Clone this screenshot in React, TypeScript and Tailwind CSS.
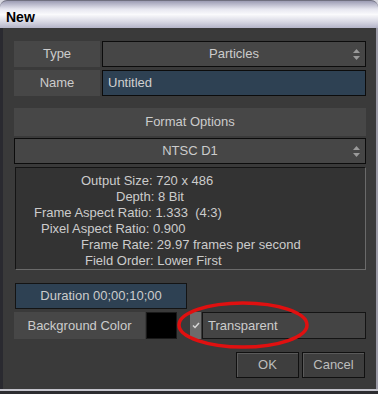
import React from 'react'

const font = { fontFamily: '"Liberation Sans", Arial, sans-serif' }

function Spinner() {
  return (
    <svg width="7" height="11" viewBox="0 0 7 11" className="absolute right-[5px] top-[7px]">
      <path d="M3.5 0 L7 4 L0 4 Z" fill="#9a9a9a" />
      <path d="M3.5 11 L7 7 L0 7 Z" fill="#9a9a9a" />
    </svg>
  )
}

const infoLines = [
  { text: 'Output Size: 720 x 486', pl: 'pl-[65px]' },
  { text: 'Depth: 8 Bit', pl: 'pl-[100px]' },
  { text: 'Frame Aspect Ratio: 1.333\u00a0 (4:3)', pl: 'pl-[18px]' },
  { text: 'Pixel Aspect Ratio: 0.900', pl: 'pl-[25px]' },
  { text: 'Frame Rate: 29.97 frames per second', pl: 'pl-[65px]' },
  { text: 'Field Order: Lower First', pl: 'pl-[69px]' },
]

export default function App() {
  return (
    <div className="w-[378px] h-[394px] bg-[#d8d8e0] relative overflow-hidden text-[13px] text-[#cccccc]" style={font}>
      {/* title bar */}
      <div className="h-[28px] rounded-t-[7px] border-t border-[#707080] bg-[linear-gradient(to_bottom,#9c9cb4_0%,#e6e6f0_30%,#fafafc_50%,#d6d6e2_78%,#b4b4c8_100%)] pl-[6px] pt-[6px]">
        <span className="text-[14px] font-bold text-black">New</span>
      </div>

      {/* body */}
      <div className="h-[361px] bg-[#3a3a3a] border-l-[3px] border-l-[#2a2a30] border-r-[2px] border-r-[#9c9ca8] pl-[11px] pr-[10px] pt-[13px]">
        <div className="flex gap-[2px] h-[26px]">
          <div className="w-[86px] bg-[#474747] flex items-center justify-center">Type</div>
          <div className="flex-1 relative bg-[#464646] border border-[#0c0c0c] flex items-center justify-center">
            Particles
            <Spinner />
          </div>
        </div>
        <div className="flex gap-[2px] h-[26px] mt-[3px]">
          <div className="w-[86px] bg-[#474747] flex items-center justify-center">Name</div>
          <div className="flex-1 bg-[#2e4153] border border-[#0c0c0c] flex items-center pl-[5px] text-[#d0d0d0]">Untitled</div>
        </div>

        <div className="mt-[12px] h-[28px] bg-[#474747] flex items-center justify-center">Format Options</div>
        <div className="mt-[2px] h-[26px] relative bg-[#464646] border border-[#0c0c0c] flex items-center justify-center">
          NTSC D1
          <Spinner />
        </div>
        <div className="mt-[3px] h-[103px] ml-[1px] bg-[#333333] border border-[#141414] border-r-[#6a6a6a] border-b-[#6a6a6a] pt-[5px] leading-[16px]">
          {infoLines.map((l) => (
            <div key={l.text} className={`${l.pl} whitespace-pre`}>{l.text}</div>
          ))}
        </div>

        <div className="mt-[13px] ml-[1px] w-[172px] h-[26px] bg-[#2e4153] border border-[#141414] flex items-center justify-center">
          Duration 00;00;10;00
        </div>

        <div className="mt-[3px] h-[27px] flex">
          <div className="w-[131px] bg-[#474747] flex items-center justify-center">Background Color</div>
          <div className="ml-[1px] w-[31px] bg-black border border-[#1a1a1a]" />
          <div className="ml-[13px] w-[11px] bg-[#6c6c6c] flex items-center justify-center">
            <svg width="8" height="7" viewBox="0 0 8 7">
              <path d="M1 3.5 L3 5.5 L7 1" stroke="#d8d8d8" strokeWidth="1.5" fill="none" />
            </svg>
          </div>
          <div className="ml-[1px] flex-1 bg-[#444444] border border-[#141414] flex items-center pl-[5px]">Transparent</div>
        </div>

        <div className="mt-[13px] flex justify-end gap-[3px] pr-[1px]">
          <button className="w-[63px] h-[26px] bg-[#3e3e3e] border border-[#101010] shadow-[inset_1px_1px_0_#5a5a5a] text-[#bdbdbd]">OK</button>
          <button className="w-[63px] h-[26px] bg-[#3e3e3e] border border-[#101010] shadow-[inset_1px_1px_0_#5a5a5a] text-[#bdbdbd]">Cancel</button>
        </div>
      </div>

      {/* bottom edge */}
      <div className="h-[2px] bg-[#c4c4cc]" />
      <div className="h-[3px] bg-[#2c2c30]" />

      {/* red annotation ellipse */}
      <svg className="absolute left-[174px] top-[300px]" width="140" height="52" viewBox="0 0 140 52">
        <ellipse cx="69" cy="25" rx="64" ry="22" fill="none" stroke="#e01010" strokeWidth="3.5" />
      </svg>
    </div>
  )
}
